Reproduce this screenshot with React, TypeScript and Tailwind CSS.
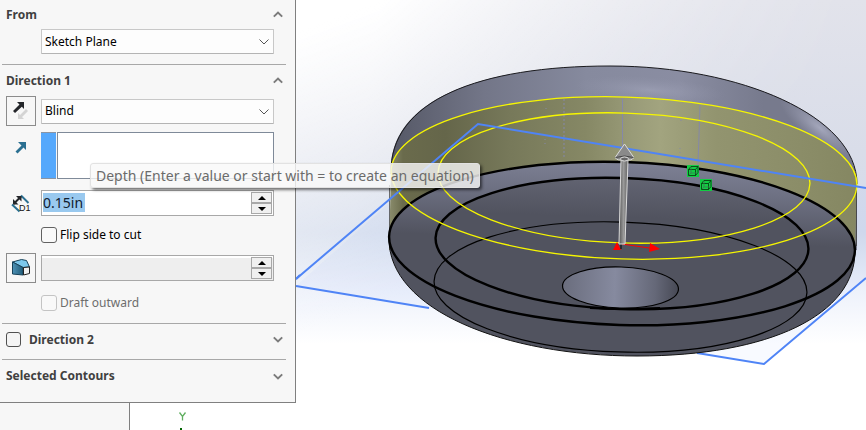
import type { ReactNode } from "react";

function Chevron({ up = false }: { up?: boolean }) {
  return (
    <svg width="10" height="7" viewBox="0 0 10 7" className="shrink-0" aria-hidden="true">
      <path d={up ? "M.8 5.6 5 1.6l4.2 4" : "M.8 1.4 5 5.4l4.2-4"} fill="none" stroke="#7c7c7c" strokeWidth="2" />
    </svg>
  );
}

function Header({ title, up = false, children }: { title: string; up?: boolean; children?: ReactNode }) {
  return (
    <div className="flex h-full items-center pl-1 pr-[3px]">
      {children}
      <h2 className="flex-1 font-bold text-[#404040]">{title}</h2>
      <button type="button" aria-label={`Toggle ${title}`}>
        <Chevron up={up} />
      </button>
    </div>
  );
}

function Dropdown({ label, value }: { label: string; value: string }) {
  return (
    <div className="relative min-w-0 flex-1">
      <select
        aria-label={label}
        className="block h-[25px] w-full appearance-none rounded-[1px] border border-[#c8c8c8] border-b-[#b4b4b4] bg-[#fdfdfd] pl-[3px] text-black outline-none"
      >
        <option>{value}</option>
      </select>
      <svg width="10" height="6" viewBox="0 0 10 6" className="pointer-events-none absolute right-[5px] top-[10px]" aria-hidden="true">
        <path d="M.5.5 5 5 9.500.5" fill="none" stroke="#555" />
      </svg>
    </div>
  );
}

function SpinButton({ label, down = false }: { label: string; down?: boolean }) {
  return (
    <button
      type="button"
      aria-label={label}
      className="flex flex-1 items-center justify-center border border-[#a8a8a8] bg-[#f0f0f0]"
    >
      <svg width="8" height="4" viewBox="0 0 8 4" aria-hidden="true">
        <path d={down ? "M0 0h8L4 4z" : "M0 4h8L4 0z"} fill="#000" />
      </svg>
    </button>
  );
}

function Spinner({ label, value, disabled = false }: { label: string; value: string; disabled?: boolean }) {
  return (
    <div
      className={
        disabled
          ? "flex h-[26px] min-w-0 flex-1 border border-[#a8a8a8] bg-[#eeeeee] p-px shadow-[inset_0_2px_0_#fff]"
          : "flex h-[26px] min-w-0 flex-1 border border-[#a8a8a8] bg-white p-px"
      }
    >
      <input
        type="text"
        aria-label={label}
        defaultValue={value}
        disabled={disabled}
        className={
          disabled
            ? "min-w-0 flex-1 bg-transparent"
            : "min-w-0 flex-1 bg-[linear-gradient(#99c9ef,#99c9ef)] bg-[length:42px_19px] bg-[position:0_1px] bg-no-repeat text-sm text-[#102030] outline-none"
        }
      />
      <div className="flex w-[21px] flex-col">
        <SpinButton label={`Increase ${label}`} />
        <SpinButton label={`Decrease ${label}`} down />
      </div>
    </div>
  );
}

function ReverseIcon() {
  return (
    <svg width="18" height="20" viewBox="0 0 18 20" aria-hidden="true">
      <path d="m6 12 0 6h6l-2-2 6-6-2-2-6 6z" fill="#d4d4d4" />
      <path d="M5 1h7v7l-2.200-2.200L3 12 1 10l6.500-6.500z" fill="#24262a" />
    </svg>
  );
}

function DirectionIcon() {
  return (
    <svg width="14" height="14" viewBox="0 0 14 14" aria-hidden="true">
      <path d="M4 2h8v8L9.500 7.500 3.500 13.500 1.500 11.500l6-6z" fill="#2b7092" />
    </svg>
  );
}

function DepthIcon() {
  return (
    <svg width="20" height="19" viewBox="0 0 20 19" aria-hidden="true">
      <path d="M10 1.500 17.500 9M1 10.500l7.500 7" stroke="#2b7092" strokeWidth="2" fill="none" />
      <path d="M2.500 10 10 2.500" stroke="#24262a" strokeWidth="2" />
      <path d="M5 2h5.500v5.500zM2 5v5.500h5.500z" fill="#24262a" />
      <text x="8" y="17" fontSize="9" fontFamily="Liberation Sans, sans-serif" fill="#111">D1</text>
    </svg>
  );
}

function DraftIcon() {
  return (
    <svg width="20" height="20" viewBox="0 0 20 20" aria-hidden="true">
      <defs>
        <linearGradient id="draftSide" x1="0" y1="0" x2="1" y2="0">
          <stop offset="0" stopColor="#4e92b6" />
          <stop offset="1" stopColor="#225d7a" />
        </linearGradient>
      </defs>
      <path d="m1.500 4 9-2.500 5 1 3 6.500-6.500.5z" fill="#7cc8ec" stroke="#17425a" />
      <path d="M1.500 4 12 9.500V17l-10.500-1z" fill="url(#draftSide)" stroke="#17425a" />
      <path d="m12.500 9.500 6-.5v6.500l-6 1.500z" fill="#f0f0f0" stroke="#222" />
    </svg>
  );
}

function ReferenceMark({ x, y }: { x: number; y: number }) {
  return (
    <g transform={`translate(${x} ${y})`}>
      <rect width="12" height="12" fill="#12cc43" />
      <path d="M1.500 4.500h7v6h-7zM1.500 4.500l2.500-3h7l-2.500 3M11 1.500v6l-2.500 3" fill="none" stroke="#06310f" strokeWidth=".8" />
      <path d="M4 2v6h6M4 8l-2 2" fill="none" stroke="#3e7352" strokeWidth=".8" />
    </g>
  );
}

function Viewport() {
  return (
    <svg
      className="absolute inset-0 h-full w-full"
      viewBox="0 0 866 430"
      preserveAspectRatio="xMinYMin slice"
      role="img"
      aria-label="Model preview"
    >
      <defs>
        <linearGradient id="sky" x1="0" y1="0" x2="0" y2="1">
          <stop offset="0" stopColor="#e2e3eb" />
          <stop offset=".35" stopColor="#d9dde9" />
          <stop offset=".54" stopColor="#d4dcec" />
          <stop offset=".68" stopColor="#eef2fb" />
          <stop offset=".8" stopColor="#ffffff" />
        </linearGradient>
        <linearGradient id="glow" gradientUnits="userSpaceOnUse" x1="330" y1="20" x2="470" y2="400">
          <stop offset="0" stopColor="#fff" />
          <stop offset=".35" stopColor="#fff" stopOpacity=".5" />
          <stop offset=".7" stopColor="#fff" stopOpacity="0" />
        </linearGradient>
        <linearGradient id="glowFade" gradientUnits="userSpaceOnUse" x1="380" y1="0" x2="860" y2="60">
          <stop offset="0" stopColor="#fff" />
          <stop offset="1" stopColor="#000" />
        </linearGradient>
        <mask id="glowMask">
          <rect width="866" height="430" fill="url(#glowFade)" />
        </mask>
        <linearGradient id="dome" gradientUnits="userSpaceOnUse" x1="391" y1="0" x2="857" y2="0">
          <stop offset="0" stopColor="#555866" />
          <stop offset=".2" stopColor="#737688" />
          <stop offset=".42" stopColor="#868a9e" />
          <stop offset=".62" stopColor="#8a8da2" />
          <stop offset=".8" stopColor="#777a8d" />
          <stop offset="1" stopColor="#777a8c" />
        </linearGradient>
        <radialGradient id="shine">
          <stop offset="0" stopColor="#b0b3c8" stopOpacity=".8" />
          <stop offset="1" stopColor="#9b9eb4" stopOpacity="0" />
        </radialGradient>
        <linearGradient id="band" gradientUnits="userSpaceOnUse" x1="389" y1="0" x2="857" y2="0">
          <stop offset="0" stopColor="#8b8d6d" />
          <stop offset=".03" stopColor="#6a6b4c" />
          <stop offset=".12" stopColor="#65664a" />
          <stop offset=".26" stopColor="#77795a" />
          <stop offset=".42" stopColor="#868865" />
          <stop offset=".52" stopColor="#999b78" />
          <stop offset=".58" stopColor="#a2a47f" />
          <stop offset=".7" stopColor="#92946f" />
          <stop offset=".88" stopColor="#8b8d68" />
          <stop offset="1" stopColor="#858762" />
        </linearGradient>
        <linearGradient id="rim" x1="0" y1="0" x2="0" y2="1">
          <stop offset="0" stopColor="#7d8094" />
          <stop offset=".18" stopColor="#6e7183" />
          <stop offset=".48" stopColor="#51535f" />
        </linearGradient>
        <linearGradient id="face" x1="0" y1="0" x2="0" y2="1">
          <stop offset="0" stopColor="#626472" />
          <stop offset=".3" stopColor="#51535f" />
        </linearGradient>
        <linearGradient id="hole">
          <stop offset="0" stopColor="#6a6d7d" />
          <stop offset=".45" stopColor="#868a9f" />
          <stop offset=".8" stopColor="#656878" />
          <stop offset="1" stopColor="#474955" />
        </linearGradient>
        <linearGradient id="shaft">
          <stop offset="0" stopColor="#555" />
          <stop offset=".5" stopColor="#999" />
          <stop offset="1" stopColor="#626262" />
        </linearGradient>
        <clipPath id="domeClip">
          <path d="M391 172C389 100 480 66 610 66S857 116 857 184L857 184A233 81 1.800 0 0 391 172Z" />
        </clipPath>
      </defs>

      <rect width="866" height="430" fill="url(#sky)" />
      <rect width="866" height="430" fill="url(#glow)" mask="url(#glowMask)" />
      <path d="M296 286 478 124l388 64v90L764 364z" fill="#6fa0ff" opacity=".05" />

      <path d="m429 308-133-22M296 279 300 275M697 353l67 11 102-86" fill="none" stroke="#4f84f6" strokeWidth="2" />

      <path
        d="M391 172C389 100 480 66 610 66S857 116 857 184V250H391z"
        fill="url(#dome)"
      />
      <g clipPath="url(#domeClip)">
        <ellipse cx="650" cy="90" rx="75" ry="13" fill="url(#shine)" opacity=".5" transform="rotate(4 650 90)" />
        <ellipse cx="820" cy="128" rx="50" ry="15" fill="url(#shine)" transform="rotate(38 820 128)" />
      </g>
      <path
        d="M391 174C389 100 480 66 610 66S857 116 857 184"
        fill="none"
        stroke="#1a1a1e"
      />
      <path d="M391 172A233 81 1.800 0 1 857 184L855 250H389z" fill="url(#band)" />
      <path d="M389.500 185v55M856.500 188v58" stroke="#333" strokeWidth=".7" />
      <path
        d="M389 238C388 310 505 356 637 356S856 315 855 250z"
        fill="#51535f"
        stroke="#111"
      />
      <g stroke="#8588a8" fill="none">
        <path d="M622.500 98v52M700 105l-2 60" />
        <path d="M564 99v60" strokeDasharray="2 2" />
        <path d="M546 108v2M545 139v6M681 120v2M680 148v6" strokeDasharray="1 3" />
      </g>

      <g fill="none" stroke="#000">
        <ellipse cx="622" cy="243.500" rx="233" ry="81.500" transform="rotate(1.800 622 243.500)" fill="url(#rim)" strokeWidth="2.400" />
        <ellipse cx="622" cy="243.500" rx="186.500" ry="65.500" transform="rotate(1.800 622 243.500)" fill="url(#face)" strokeWidth="2.400" />
        <ellipse cx="620.500" cy="287" rx="186.500" ry="65" transform="rotate(1.800 620.500 287)" strokeWidth="1.200" />
        <ellipse cx="620.500" cy="287.500" rx="58" ry="20.500" transform="rotate(1.800 620.500 287.500)" fill="url(#hole)" strokeWidth="1.200" />
      </g>
      <path d="M590 308q30 2 70 0" stroke="#000" strokeWidth="2" fill="none" />
      <g fill="none" stroke="#f6f600" strokeWidth="1.300">
        <ellipse cx="624" cy="178" rx="233" ry="81" transform="rotate(1.800 624 178)" />
        <ellipse cx="624" cy="178" rx="186" ry="65" transform="rotate(1.800 624 178)" />
      </g>
      <path d="M296 279 478 124l388 64" fill="none" stroke="#4f84f6" strokeWidth="2" />

      <path d="m622 244 34 5" stroke="#f00" />
      <path d="m613 250 4-8 4 8zM650 243l10 6-11 3z" fill="#f00" />
      <path d="M621 240v9" stroke="#000" />
      <path d="m621 160-2 84h6l3-84z" fill="url(#shaft)" stroke="#dcdcdc" />
      <path d="m624.500 144-9 13q0 3 5 3h8q5 0 5-3z" fill="#8a8a8a" stroke="#dcdcdc" />
      <path d="M615.500 157.500q9-3 18 0" stroke="#444" fill="none" />
      <ellipse cx="624.500" cy="159" rx="4" ry="2" fill="#666" stroke="#dcdcdc" />

      <ReferenceMark x={687} y={165} />
      <ReferenceMark x={700} y={179} />

      <path d="m179.500 412.500 3 4 3-4M182.500 416.500v4" stroke="#5fae5f" strokeWidth="1.300" fill="none" />
      <path d="M180 428h2v2h-2z" fill="#006400" />
    </svg>
  );
}

export default function App() {
  return (
    <main className="relative flex min-h-screen flex-col overflow-hidden bg-white font-['Noto_Sans','Open_Sans',sans-serif] text-xs">
      <Viewport />

      <form className="relative w-[296px] border-b border-r border-[#808080] bg-[#f7f7f7] pl-0.5 pr-[9px]">
        <section className="pb-2.5">
          <div className="h-[29px]">
            <Header title="From" up />
          </div>
          <div className="flex pl-[39px] pr-3">
            <Dropdown label="Start condition" value="Sketch Plane" />
          </div>
        </section>

        <section className="border-t border-[#a8a8a8] pb-3">
          <div className="h-[31px]">
            <Header title="Direction 1" up />
          </div>
          <div className="pl-1 pr-3">
            <div className="flex items-center gap-[5px]">
              <button type="button" aria-label="Reverse direction" className="flex size-[30px] items-center justify-center border border-[#8c8c8c]">
                <ReverseIcon />
              </button>
              <Dropdown label="End condition" value="Blind" />
            </div>

            <div className="mt-1.5 flex gap-[5px]">
              <span className="flex w-[30px] justify-center pt-2">
                <DirectionIcon />
              </span>
              <div className="flex h-[47px] min-w-0 flex-1 gap-px">
                <div className="w-[15px] border-y border-[#8a94a3] bg-[#55a8fc]" />
                <textarea
                  aria-label="Direction of extrusion"
                  className="min-w-0 flex-1 resize-none border border-[#7f8a99] bg-white outline-none"
                />
              </div>
            </div>

            <div className="mt-[11px] flex items-center gap-[5px]">
              <span className="flex w-[30px] justify-center">
                <DepthIcon />
              </span>
              <Spinner label="Depth" value="0.15in" />
            </div>

            <label className="mt-[11px] flex h-4 items-center gap-[3px] pl-[35px] text-black">
              <input type="checkbox" className="size-4 appearance-none rounded-[3px] border border-[#626262] bg-[#f9f9f9]" />
              Flip side to cut
            </label>

            <div className="mt-2.5 flex items-center gap-[5px]">
              <button type="button" aria-label="Draft on/off" className="flex size-[30px] items-center justify-center border border-[#8c8c8c]">
                <DraftIcon />
              </button>
              <Spinner label="Draft angle" value="" disabled />
            </div>

            <label className="mt-3 flex h-4 items-center gap-[3px] pl-[35px] text-[#6d6d6d]">
              <input type="checkbox" disabled className="size-4 appearance-none rounded-[3px] border border-[#c4c4c4] bg-[#f9f9f9]" />
              Draft outward
            </label>
          </div>
        </section>

        <section className="h-9 border-t border-[#a8a8a8] pb-1">
          <Header title="Direction 2">
            <input
              type="checkbox"
              aria-label="Enable Direction 2"
              className="mr-2 size-[15px] appearance-none rounded-[3px] border border-[#505050] bg-[#f4f4f4]"
            />
          </Header>
        </section>

        <section className="border-t border-[#a8a8a8] pb-2.5">
          <div className="h-8">
            <Header title="Selected Contours" />
          </div>
        </section>
      </form>

      <div className="relative w-[130px] flex-1 border-r border-[#808080] bg-[#f7f7f7]" />

      <div
        role="tooltip"
        className="absolute left-[90px] top-[163px] flex h-[25px] items-center whitespace-nowrap rounded-[3px] border border-[#e2e2e2] bg-[#f9f9f9]/80 px-[5px] text-sm text-[#6b6b6b] shadow-[2px_2px_3px_rgba(0,0,0,0.55)]"
      >
        Depth (Enter a value or start with = to create an equation)
      </div>
    </main>
  );
}
